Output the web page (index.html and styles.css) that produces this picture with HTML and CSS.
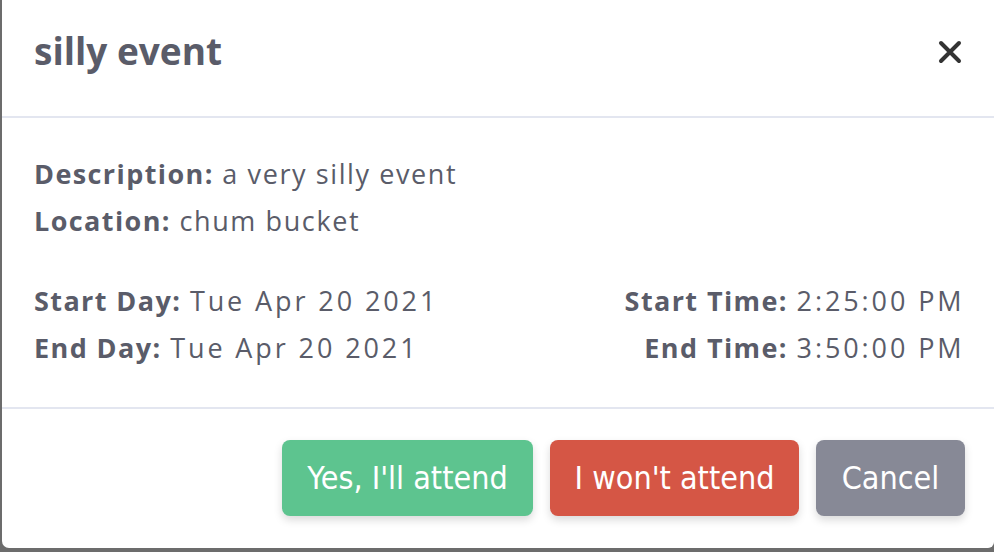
FILE: index.html
```html
<!DOCTYPE html>
<html>
<head>
<meta charset="utf-8">
<link rel="stylesheet" href="styles.css">
</head>
<body>
<div class="modal">
  <div class="modal-header">
    <h5 class="modal-title">silly event</h5>
    <button class="close" aria-label="Close">
      <svg width="24" height="24" viewBox="0 0 24 24"><path d="M3 3L21 21M21 3L3 21" stroke="#333" stroke-width="4" stroke-linecap="round"/></svg>
    </button>
  </div>
  <div class="modal-body">
    <div class="info">
      <div class="line"><b>Description:</b> a very silly event</div>
      <div class="line"><b>Location:</b> chum bucket</div>
    </div>
    <div class="times">
      <div class="col">
        <div class="line"><b>Start Day:</b> <span class="num">Tue Apr 20 2021</span></div>
        <div class="line"><b>End Day:</b> <span class="num">Tue Apr 20 2021</span></div>
      </div>
      <div class="col right">
        <div class="line"><b>Start Time:</b> <span class="num">2:25:00 PM</span></div>
        <div class="line"><b>End Time:</b> <span class="num">3:50:00 PM</span></div>
      </div>
    </div>
  </div>
  <div class="modal-footer">
    <button class="btn btn-success">Yes, I'll attend</button>
    <button class="btn btn-danger">I won't attend</button>
    <button class="btn btn-secondary">Cancel</button>
  </div>
</div>
</body>
</html>
```
FILE: styles.css
```css
html, body {
  margin: 0;
  padding: 0;
  height: 552px;
  overflow: hidden;
  background: #6c6c6c;
}
.modal {
  margin-left: 2px;
  width: 992px;
  height: 548px;
  background: #fff;
  border-radius: 0 0 6px 7px;
  font-family: "Open Sans", "Noto Sans", sans-serif;
  color: #5a5c69;
  display: flex;
  flex-direction: column;
}
.modal-header {
  height: 118px;
  flex: none;
  box-sizing: border-box;
  display: flex;
  align-items: flex-start;
  justify-content: space-between;
  padding: 0 32px;
  border-bottom: 2px solid #e3e6f0;
}
.modal-title {
  margin: 32px 0 0 0;
  font-size: 37px;
  font-weight: 700;
  line-height: 1;
}
.close {
  background: none;
  border: 0;
  padding: 0;
  display: flex;
  width: 24px;
  height: 24px;
  margin-top: 40px;
}
.modal-body {
  height: 289px;
  flex: none;
  box-sizing: border-box;
  padding: 32px 32px 0 32px;
  font-size: 27px;
  letter-spacing: 1.6px;
}
.line {
  line-height: 47px;
  white-space: nowrap;
}
.line b {
  font-weight: 700;
  letter-spacing: 1.4px;
}
.num {
  letter-spacing: 2.9px;
}
.times {
  display: flex;
  justify-content: space-between;
  margin-top: 33px;
}
.right {
  text-align: right;
  margin-right: -2.5px;
}
.modal-footer {
  border-top: 2px solid #e3e6f0;
  display: flex;
  justify-content: flex-end;
  padding: 31px 29px 0 0;
  gap: 17px;
}
.btn {
  height: 76px;
  border: 0;
  border-radius: 8px;
  color: #fff;
  font-family: "DejaVu Sans Condensed", "Liberation Sans Narrow", sans-serif;
  font-size: 32px;
  padding: 0;
  box-shadow: 0 4px 8px rgba(0,0,0,0.15);
}
.btn-success { background: #5dc48f; width: 251px; }
.btn-danger { background: #d55645; width: 249px; }
.btn-secondary { background: #878996; width: 149px; }
```
